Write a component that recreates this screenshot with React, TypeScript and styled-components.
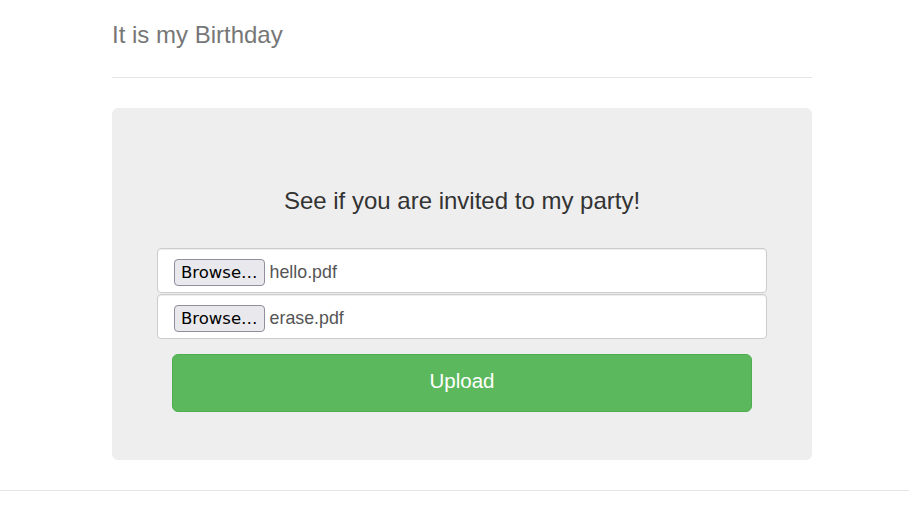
import React from "react";
import styled, { createGlobalStyle } from "styled-components";

const Global = createGlobalStyle`
  html, body { margin: 0; padding: 0; background: #fff; }
  body { font-family: "Liberation Sans", Arial, sans-serif; font-size: 14px; color: #333; }
`;

const Page = styled.div`
  padding-top: 15px;
`;

const Container = styled.div`
  width: 700px;
  margin-left: 112px;
`;

const Header = styled.header`
  padding-bottom: 22px;
  border-bottom: 1px solid #e5e5e5;
  margin-bottom: 30px;
`;

const Title = styled.h3`
  margin: 0;
  font-size: 24px;
  font-weight: 400;
  line-height: 40px;
  color: #777;
`;

const Jumbotron = styled.div`
  background: #eee;
  border-radius: 6px;
  padding: 73px 45px 48px;
  text-align: center;
`;

const Lead = styled.h3`
  margin: 0 0 27px;
  font-size: 24px;
  font-weight: 400;
  line-height: 40px;
  color: #333;
`;

const Form = styled.form`
  display: flex;
  flex-direction: column;
  gap: 1px;
`;

const FileField = styled.div`
  display: flex;
  align-items: center;
  gap: 5px;
  height: 45px;
  box-sizing: border-box;
  padding: 0 16px;
  background: #fff;
  border: 1px solid #ccc;
  border-radius: 4px;
  box-shadow: inset 0 1px 1px rgba(0, 0, 0, 0.075);
  text-align: left;
`;

const BrowseButton = styled.span`
  display: inline-flex;
  align-items: center;
  height: 27px;
  box-sizing: border-box;
  padding: 0 6px;
  background: #e9e9ed;
  border: 1px solid #8f8f9d;
  border-radius: 4px;
  font-family: "DejaVu Sans", sans-serif;
  font-size: 16.5px;
  color: #000;
  margin-top: 4px;
`;

const FileName = styled.span`
  font-size: 17.8px;
  color: #555;
  margin-top: 4px;
`;

const UploadButton = styled.button`
  display: block;
  margin: 14px 15px 0;
  height: 58px;
  padding: 0 0 4px;
  background: #5cb85c;
  border: 1px solid #4cae4c;
  border-radius: 6px;
  color: #fff;
  font-family: "Liberation Sans", Arial, sans-serif;
  font-size: 20.5px;
  cursor: pointer;
`;

const Footer = styled.footer`
  margin-top: 30px;
  border-top: 1px solid #e5e5e5;
  height: 36px;
`;

const files = ["hello.pdf", "erase.pdf"];

export default function App() {
  return (
    <>
      <Global />
      <Page>
        <Container>
          <Header>
            <Title>It is my Birthday</Title>
          </Header>
          <Jumbotron>
            <Lead>See if you are invited to my party!</Lead>
            <Form onSubmit={(e) => e.preventDefault()}>
              {files.map((f) => (
                <FileField key={f}>
                  <BrowseButton>Browse…</BrowseButton>
                  <FileName>{f}</FileName>
                </FileField>
              ))}
              <UploadButton type="submit">Upload</UploadButton>
            </Form>
          </Jumbotron>
        </Container>
        <Footer />
      </Page>
    </>
  );
}
